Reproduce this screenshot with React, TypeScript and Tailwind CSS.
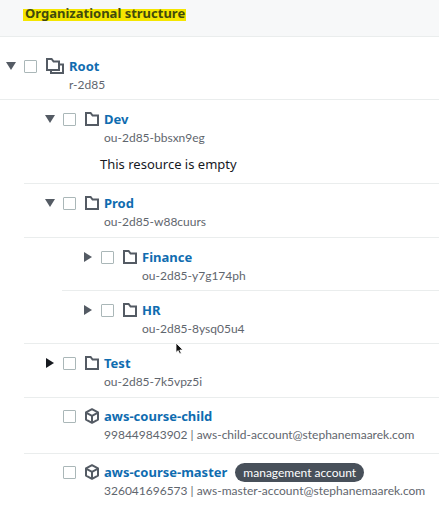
import type { ReactNode } from "react";

type Kind = "root" | "folder" | "account";

function FolderIcon() {
  return (
    <svg width="14" height="14" viewBox="0 0 14 14" fill="none" stroke="#545b64" strokeWidth="2" aria-hidden="true">
      <path d="M1 1h4.6l2 2.6H13V13H1z" />
    </svg>
  );
}

function FoldersIcon() {
  return (
    <svg width="18" height="16" viewBox="0 0 18 16" fill="none" stroke="#545b64" strokeWidth="2" aria-hidden="true">
      <path d="M1 1h4.6l2 2.6H13V12H1z" />
      <path d="M13 6.5h4V15H5v-3" />
    </svg>
  );
}

function CubeIcon() {
  return (
    <svg width="14" height="16" viewBox="0 0 14 16" fill="none" stroke="#545b64" strokeWidth="2" strokeLinejoin="round" aria-hidden="true">
      <path d="M7 1.2l6 3.2v7.2l-6 3.2-6-3.2V4.4z" />
      <path d="M1 4.6l6 3.2 6-3.2M7 7.8v7" />
    </svg>
  );
}

function Toggle({ open, name, dark }: { open: boolean; name: string; dark?: boolean }) {
  return (
    <button
      type="button"
      aria-expanded={open}
      aria-label={`Toggle ${name}`}
      className={`flex h-[18px] w-[10px] shrink-0 items-center justify-center ${dark ? "text-[#16191f]" : "text-[#545b64]"}`}
    >
      <svg width="10" height="10" viewBox="0 0 10 10" fill="currentColor" aria-hidden="true">
        {open ? <path d="M0 1h10L5 9z" /> : <path d="M1 0l8 5-8 5z" />}
      </svg>
    </button>
  );
}

interface RowProps {
  kind: Kind;
  name: string;
  detail: string;
  open?: boolean;
  dark?: boolean;
  badge?: string;
  className: string;
}

function Row({ kind, name, detail, open, dark, badge, className }: RowProps) {
  return (
    <div className={`flex items-start ${className}`}>
      {open === undefined ? <span className="w-[10px] shrink-0" /> : <Toggle open={open} name={name} dark={dark} />}
      <span className="ml-2 flex h-[18px] shrink-0 items-center">
        <input
          type="checkbox"
          aria-label={`Select ${name}`}
          className="size-[13px] appearance-none rounded-[1px] border border-[#aab7b8] bg-white checked:bg-[#0073bb]"
        />
      </span>
      <span className="ml-[9px] flex h-[18px] shrink-0 items-center">
        {kind === "root" ? <FoldersIcon /> : kind === "folder" ? <FolderIcon /> : <CubeIcon />}
      </span>
      <div className="ml-[5px] min-w-0 whitespace-nowrap">
        <div className="flex h-[18px] items-center gap-2">
          <a href="#" className="text-[13px] leading-[18px] font-bold text-[#0f6cb0]">
            {name}
          </a>
          {badge && (
            <span className="rounded-full bg-[#48505a] px-2 font-[Lato,sans-serif] text-[12px] leading-[19px] text-white">
              {badge}
            </span>
          )}
        </div>
        <div className="font-[Lato,sans-serif] text-[12px] leading-[19px] text-[#5f666e]">{detail}</div>
      </div>
    </div>
  );
}

function Item({ children, last }: { children: ReactNode; last?: boolean }) {
  return <li className={last ? "" : "border-b border-[#eaeded]"}>{children}</li>;
}

export default function App() {
  return (
    <main className="relative min-h-screen overflow-hidden bg-white font-['Noto_Sans','Open_Sans',sans-serif]">
      <header className="flex h-[37px] items-start border-b border-[#eaeded] bg-[#f7f8f9] pt-[9px] pl-[23px]">
        <h1 className="text-[13px] font-bold">
          <mark className="block h-[12px] bg-[#f5e600] pr-px pl-[2px] leading-[9px] text-[#424a0c]">
            Organizational structure
          </mark>
        </h1>
      </header>
      <section aria-label="Organizational structure">
        <Row kind="root" name="Root" detail="r-2d85" open className="border-b border-[#eaeded] pt-5 pb-[5px] pl-[6px]" />
        <ul className="ml-6">
          <Item>
            <Row kind="folder" name="Dev" detail="ou-2d85-bbsxn9eg" open className="pt-[10px] pl-[21px]" />
            <p className="pt-2 pb-[10px] pl-[76px] text-[13px] leading-[18px] text-[#16191f]">This resource is empty</p>
          </Item>
          <Item>
            <Row kind="folder" name="Prod" detail="ou-2d85-w88cuurs" open className="border-b border-[#eaeded] pt-[10px] pb-[6px] pl-[21px]" />
            <ul className="ml-[38px]">
              <Item>
                <Row kind="folder" name="Finance" detail="ou-2d85-y7g174ph" open={false} className="pt-[10px] pb-[5px] pl-[21px]" />
              </Item>
              <Item last>
                <Row kind="folder" name="HR" detail="ou-2d85-8ysq05u4" open={false} className="pt-[10px] pb-[5px] pl-[21px]" />
              </Item>
            </ul>
          </Item>
          <Item>
            <Row kind="folder" name="Test" detail="ou-2d85-7k5vpz5i" open={false} dark className="pt-[10px] pb-[6px] pl-[21px]" />
          </Item>
          <Item>
            <Row kind="account" name="aws-course-child" detail="998449843902 | aws-child-account@stephanemaarek.com" className="pt-[9px] pb-[9px] pl-[21px]" />
          </Item>
          <Item last>
            <Row kind="account" name="aws-course-master" detail="326041696573 | aws-master-account@stephanemaarek.com" badge="management account" className="pt-[9px] pb-[10px] pl-[21px]" />
          </Item>
        </ul>
      </section>
      <svg className="pointer-events-none absolute top-[342px] left-[175px]" width="9" height="13" viewBox="0 0 9 13" fill="#111" stroke="#fff" strokeWidth="0.8" aria-hidden="true">
        <path d="M1 1v9.5l2.2-1.9 1.5 3.4 1.6-.7-1.5-3.3H8z" />
      </svg>
    </main>
  );
}
